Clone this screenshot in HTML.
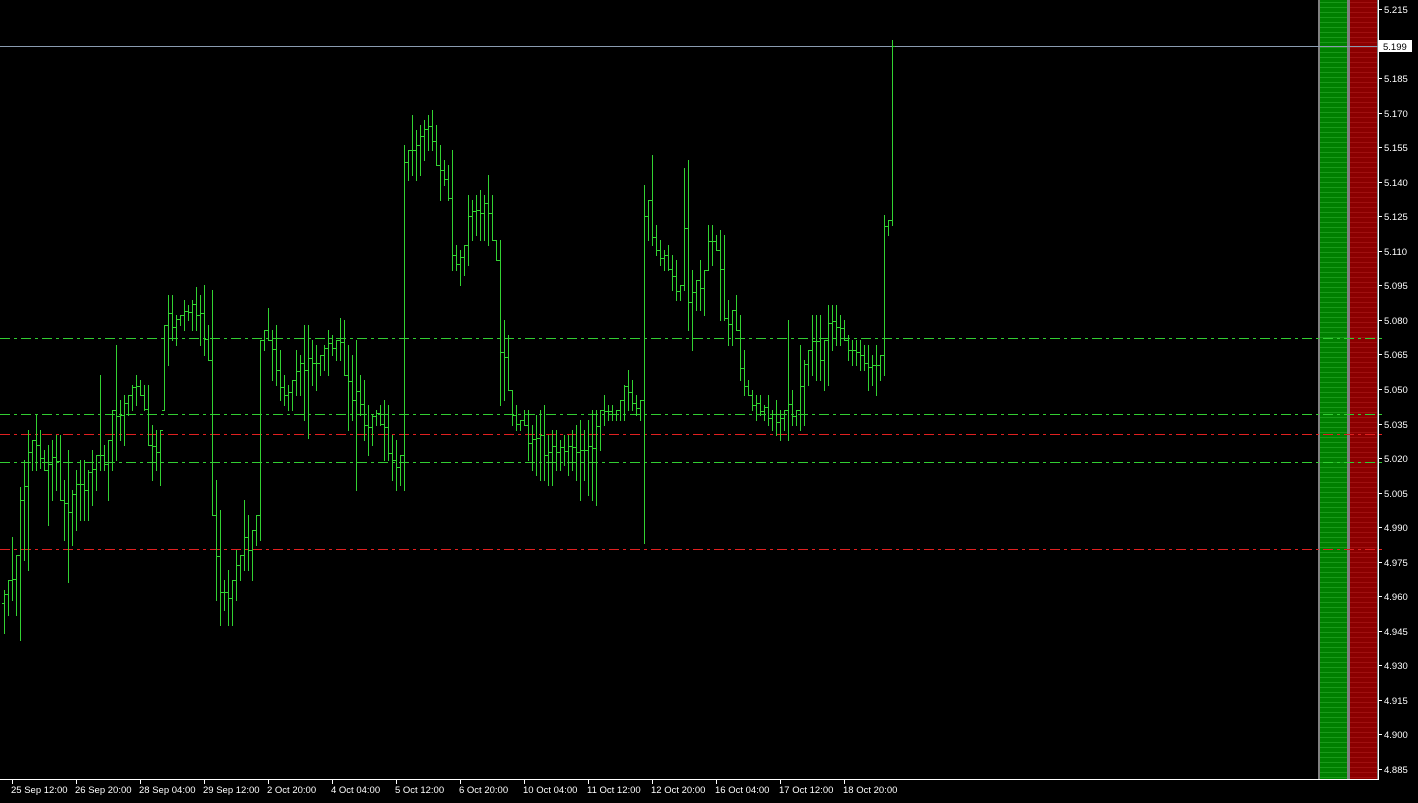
<!DOCTYPE html>
<html><head><meta charset="utf-8"><style>
html,body{margin:0;padding:0;background:#000;width:1418px;height:803px;overflow:hidden}
svg{display:block;shape-rendering:crispEdges}
text{font-family:"Liberation Sans",sans-serif;font-size:9.5px;fill:#fff}
</style></head><body>
<svg id="s" width="1418" height="803" xmlns="http://www.w3.org/2000/svg" shape-rendering="crispEdges">
<rect width="1418" height="803" fill="#000"/>
<g id="panel"></g>
<rect x="0" y="46" width="1378" height="1" fill="#8a9bb0"/>
<g id="hl"></g>
<g id="bars"></g>
<rect x="1378" y="0" width="1" height="780" fill="#fff"/>
<rect x="0" y="779" width="1379" height="1" fill="#fff"/>
<g id="axis"></g>
<rect x="1379" y="40" width="33" height="12" fill="#fff"/>
<text x="1383" y="50" style="fill:#000">5.199</text>
</svg>
<script>
var NS="http://www.w3.org/2000/svg";
function el(t,a,p,txt){var e=document.createElementNS(NS,t);for(var k in a)e.setAttribute(k,a[k]);if(txt)e.textContent=txt;p.appendChild(e);return e;}
var panel=document.getElementById('panel');
el('rect',{x:1318,y:0,width:60,height:779,fill:'#808080'},panel);
el('rect',{x:1320,y:0,width:27,height:779,fill:'#008000'},panel);
el('rect',{x:1350,y:0,width:27,height:779,fill:'#8b0000'},panel);
for(var y=2;y<779;y+=5){el('rect',{x:1320,y:y,width:27,height:1,fill:'#1a9a1a'},panel);el('rect',{x:1350,y:y,width:27,height:1,fill:'#a01010'},panel);}
var hl=document.getElementById('hl');
[[338,'#32cd32'],[414,'#32cd32'],[462,'#32cd32'],[434,'#e02020'],[549,'#e02020']].forEach(function(L){
for(var x=0;x<1378;x+=21){el('rect',{x:x,y:L[0],width:10,height:1,fill:L[1]},hl);el('rect',{x:x+14,y:L[0],width:3,height:1,fill:L[1]},hl);}});
var d=[[590,633],[580,615],[537,600],[555,615],[487,640],[460,560],[430,570],[440,470],[415,470],[430,468],[450,470],[445,525],[440,500],[435,490],[435,500],[480,540],[450,582],[490,545],[470,530],[460,520],[460,520],[470,520],[450,505],[455,490],[375,470],[445,470],[440,500],[410,470],[345,460],[400,440],[395,445],[395,415],[385,410],[375,405],[380,395],[385,410],[385,445],[425,480],[430,470],[430,485],[325,410],[295,365],[295,340],[315,345],[315,325],[300,330],[305,320],[300,330],[287,330],[295,345],[285,355],[325,360],[290,515],[480,600],[510,625],[580,610],[570,625],[580,625],[550,600],[555,580],[500,570],[515,570],[530,580],[515,545],[340,540],[330,350],[308,340],[330,380],[325,385],[350,400],[375,405],[385,410],[380,410],[350,395],[355,395],[325,420],[325,438],[340,385],[345,390],[355,375],[345,370],[330,375],[335,355],[340,360],[318,360],[320,375],[345,430],[355,420],[340,490],[375,415],[380,440],[405,455],[415,445],[410,425],[405,425],[400,460],[405,460],[435,480],[440,490],[455,485],[145,490],[150,180],[115,175],[130,180],[125,175],[120,160],[115,150],[110,150],[125,165],[145,200],[160,185],[165,200],[150,270],[245,270],[250,285],[245,275],[195,265],[200,240],[195,235],[190,240],[195,240],[175,245],[195,240],[240,260],[240,405],[320,400],[335,390],[390,425],[405,430],[420,430],[410,425],[410,460],[425,470],[415,475],[410,480],[405,480],[435,485],[430,485],[430,470],[440,470],[435,465],[435,475],[430,470],[425,480],[420,500],[430,480],[420,495],[410,500],[410,505],[410,450],[395,425],[405,420],[405,420],[410,420],[400,420],[385,420],[370,410],[380,410],[395,415],[400,420],[185,543],[200,240],[155,245],[225,255],[240,265],[250,270],[245,270],[255,290],[260,300],[285,300],[168,290],[160,330],[270,350],[280,310],[260,310],[270,315],[225,270],[225,265],[235,250],[230,320],[235,320],[300,345],[310,345],[295,330],[315,380],[350,395],[380,395],[390,410],[395,420],[395,415],[405,420],[395,425],[410,430],[400,435],[410,440],[410,430],[320,440],[390,425],[410,425],[345,430],[360,425],[350,385],[315,375],[315,380],[315,380],[340,390],[305,385],[305,350],[305,345],[315,345],[320,340],[335,360],[340,365],[340,365],[340,370],[345,370],[345,390],[355,385],[345,395],[355,380],[215,375],[220,235],[40,225]];
var g=document.getElementById('bars');var prevC=null;var C='#32d232';
var n=d.length,x0=4,x1=892;
for(var i=0;i<n;i++){var x=Math.round(x0+(x1-x0)*i/(n-1));var h=d[i][0],l=d[i][1];
var o=prevC!==null?Math.min(Math.max(prevC,h),l):h+(l-h)*0.3;
var c=(i<n-1)?Math.min(Math.max(d[i+1][0]+(d[i+1][1]-d[i+1][0])*0.4,h),l):46;
el('rect',{x:x,y:h,width:1,height:l-h+1,fill:C},g);
el('rect',{x:x-2,y:Math.round(o),width:2,height:1,fill:C},g);
el('rect',{x:x+1,y:Math.round(c),width:2,height:1,fill:C},g);
prevC=c;}
var ax=document.getElementById('axis');
for(var k=0;k<=22;k++){var p=5.215-0.015*k;var y=9+k*760/22;
el('rect',{x:1378,y:Math.round(y),width:4,height:1,fill:'#fff'},ax);
el('text',{x:1384,y:Math.round(y)+4},ax,p.toFixed(3));}
var labs=["25 Sep 12:00","26 Sep 20:00","28 Sep 04:00","29 Sep 12:00","2 Oct 20:00","4 Oct 04:00","5 Oct 12:00","6 Oct 20:00","10 Oct 04:00","11 Oct 12:00","12 Oct 20:00","16 Oct 04:00","17 Oct 12:00","18 Oct 20:00"];
el('text',{x:-5,y:793},ax,"0");
for(var j=0;j<labs.length;j++){var tx=12+64*j;el('rect',{x:tx,y:780,width:1,height:4,fill:'#fff'},ax);el('text',{x:tx-1,y:793},ax,labs[j]);}
</script>
</body></html>
